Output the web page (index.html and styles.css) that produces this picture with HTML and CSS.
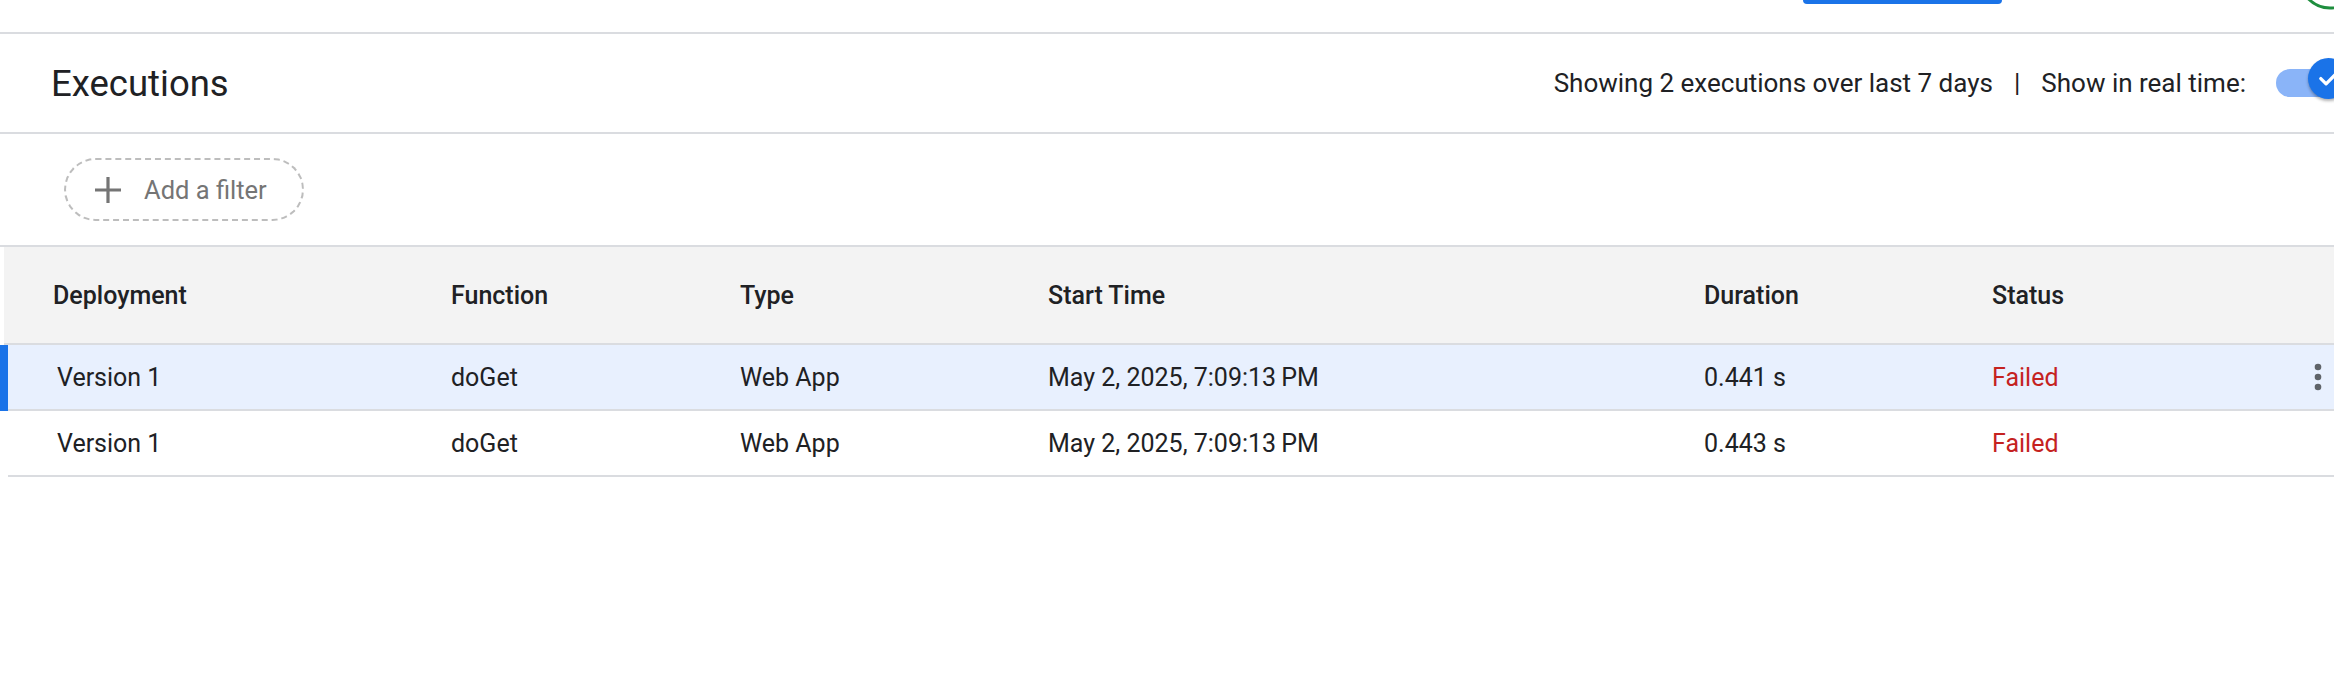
FILE: index.html
```html
<!DOCTYPE html>
<html lang="en">
<head>
<meta charset="utf-8">
<title>Executions</title>
<link rel="stylesheet" href="styles.css">
</head>
<body>
<div class="page">
  <div class="topbar">
    <div class="top-btn"></div>
    <div class="avatar-ring">
      <svg width="60" height="32" viewBox="0 0 60 32"><circle cx="30" cy="-22" r="30" fill="none" stroke="#1e8e3e" stroke-width="3"/></svg>
    </div>
  </div>

  <div class="heading">
    <h1 class="title">Executions</h1>
    <div class="meta">
      <span class="meta-text">Showing 2 executions over last 7 days</span>
      <span class="sep">|</span>
      <span class="meta-text">Show in real time:</span>
      <div class="toggle">
        <div class="track"></div>
        <div class="thumb">
          <svg width="28" height="28" viewBox="0 0 24 24"><path d="M5 12.5l4.5 4.5L19 7.5" fill="none" stroke="#fff" stroke-width="2.8" stroke-linecap="round" stroke-linejoin="round"/></svg>
        </div>
      </div>
    </div>
  </div>

  <div class="filters">
    <button class="pill">
      <svg class="plus" width="28" height="28" viewBox="0 0 28 28"><path d="M14 1v26M1 14h26" stroke="#757575" stroke-width="3.2" fill="none"/></svg>
      <span>Add a filter</span>
    </button>
  </div>

  <div class="table">
    <div class="thead">
      <div class="cell first">Deployment</div>
      <div class="cell">Function</div>
      <div class="cell">Type</div>
      <div class="cell">Start Time</div>
      <div class="cell">Duration</div>
      <div class="cell">Status</div>
      <div class="cell"></div>
    </div>

    <div class="row selected">
      <div class="marker"></div>
      <div class="cells">
        <div class="cell first">Version 1</div>
        <div class="cell">doGet</div>
        <div class="cell">Web App</div>
        <div class="cell">May 2, 2025, 7:09:13&#8201;PM</div>
        <div class="cell">0.441 s</div>
        <div class="cell failed">Failed</div>
        <div class="cell kebab">
          <svg width="10" height="30" viewBox="0 0 10 30"><circle cx="5" cy="5" r="3.3" fill="#5f6368"/><circle cx="5" cy="15" r="3.3" fill="#5f6368"/><circle cx="5" cy="25" r="3.3" fill="#5f6368"/></svg>
        </div>
      </div>
    </div>

    <div class="row">
      <div class="marker"></div>
      <div class="cells">
        <div class="cell first">Version 1</div>
        <div class="cell">doGet</div>
        <div class="cell">Web App</div>
        <div class="cell">May 2, 2025, 7:09:13&#8201;PM</div>
        <div class="cell">0.443 s</div>
        <div class="cell failed">Failed</div>
        <div class="cell kebab"></div>
      </div>
    </div>
  </div>
</div>
</body>
</html>
```

FILE: styles.css
```css
* { box-sizing: border-box; }

html, body {
  margin: 0;
  padding: 0;
  background: #ffffff;
}

body {
  font-family: Roboto, "Liberation Sans", Arial, sans-serif;
  color: #202124;
  overflow: hidden;
  width: 2334px;
  height: 692px;
}

.page {
  width: 2334px;
  overflow: hidden;
}

/* top bar remnant */
.topbar {
  height: 34px;
  border-bottom: 2px solid #dadce0;
  display: flex;
  align-items: flex-start;
  overflow: hidden;
}

.top-btn {
  margin-left: 1803px;
  width: 199px;
  height: 4px;
  background: #1a73e8;
  border-radius: 0 0 6px 6px;
}

.avatar-ring {
  margin-left: auto;
  width: 60px;
  height: 32px;
  margin-right: -26px;
}

.avatar-ring svg { display: block; }

/* heading */
.heading {
  height: 100px;
  border-bottom: 2px solid #dadce0;
  display: flex;
  align-items: center;
  padding-left: 51px;
}

.title {
  margin: 0;
  font-size: 36.5px;
  font-weight: 400;
  color: #202124;
}

.meta {
  margin-left: auto;
  display: flex;
  align-items: center;
  font-size: 26px;
  color: #202124;
  margin-right: -16px;
}

.sep {
  margin: 0 21px;
  font-size: 26px;
}

.toggle {
  margin-left: 30px;
  width: 74px;
  height: 44px;
  display: flex;
  align-items: center;
  margin-top: -10px;
}

.track {
  width: 72px;
  height: 28px;
  background: #8ab4f8;
  border-radius: 14px;
  margin-top: 10px;
  flex: none;
}

.thumb {
  width: 41px;
  height: 41px;
  border-radius: 50%;
  background: #1a73e8;
  margin-left: -40px;
  display: flex;
  align-items: center;
  justify-content: center;
  box-shadow: 0 2px 3px rgba(0,0,0,0.3);
  flex: none;
}

.thumb svg { display: block; }

/* filters */
.filters {
  height: 113px;
  border-bottom: 2px solid #dadce0;
  display: flex;
  align-items: center;
  padding-left: 64px;
}

.pill {
  height: 63px;
  width: 240px;
  border: 2px dashed #bdbdbd;
  border-radius: 32px;
  background: #fff;
  display: flex;
  align-items: center;
  padding: 0 0 0 28px;
  font-family: inherit;
  font-size: 25.5px;
  color: #757575;
  gap: 22px;
}

.plus { display: block; flex: none; }

/* table */
.table {
  --cols: 289px 308px 656px 288px 1fr 32px;
}

.thead {
  margin-left: 4px;
  height: 98px;
  background: #f3f3f3;
  border-bottom: 2px solid #dadce0;
  display: grid;
  grid-template-columns: 447px var(--cols);
  align-items: center;
  font-size: 25px;
  font-weight: 500;
}

.row {
  display: flex;
}

.marker {
  width: 8px;
  flex: none;
  background: #fff;
}

.row.selected .marker { background: #1a73e8; }

.cells {
  flex: 1;
  height: 66px;
  border-bottom: 2px solid #dadce0;
  display: grid;
  grid-template-columns: 443px var(--cols);
  align-items: center;
  font-size: 25px;
}

.row.selected .cells { background: #e8f0fe; }

.cell.first { padding-left: 49px; }

.failed { color: #c5221f; }

.kebab {
  display: flex;
  justify-content: center;
}

.kebab svg { display: block; }
```
